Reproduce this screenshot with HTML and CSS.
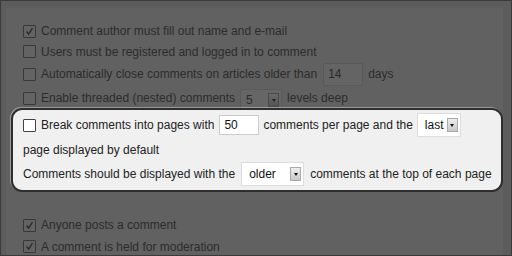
FILE: index.html
```html
<!DOCTYPE html>
<html lang="en">
<head>
    <meta charset="UTF-8">
    <title>Discussion Settings</title>
    <link rel="stylesheet" href="styles.css">
</head>
<body>
    <div class="frame">
        <div class="page">
            <div class="row row-first">
                <span class="check checked"><svg viewBox="0 0 13 13"><path d="M3 6.5 L5.5 9.5 L10 2.5" /></svg></span>
                Comment author must fill out name and e-mail
            </div>
            <div class="row row-second">
                <span class="check"></span>
                Users must be registered and logged in to comment
            </div>
            <div class="row row-tall">
                <span class="check"></span>
                Automatically close comments on articles older than
                <span class="field field-dim field-days">14</span>
                days
            </div>
            <div class="row row-tall">
                <span class="check"></span>
                Enable threaded (nested) comments
                <span class="select select-dim select-levels">5<span class="arrow"></span></span>
                levels deep
            </div>

            <section class="focus">
                <div class="focus-row">
                    <span class="check"></span>
                    Break comments into pages with
                    <span class="field field-pages">50</span>
                    comments per page and the
                    <span class="select select-last">last<span class="arrow"></span></span>
                </div>
                <div class="focus-row focus-plain">page displayed by default</div>
                <div class="focus-row focus-plain">
                    Comments should be displayed with the
                    <span class="select select-order">older<span class="arrow"></span></span>
                    comments at the top of each page
                </div>
            </section>

            <div class="row row-notify">
                <span class="check checked"><svg viewBox="0 0 13 13"><path d="M3 6.5 L5.5 9.5 L10 2.5" /></svg></span>
                Anyone posts a comment
            </div>
            <div class="row row-notify-next">
                <span class="check checked"><svg viewBox="0 0 13 13"><path d="M3 6.5 L5.5 9.5 L10 2.5" /></svg></span>
                A comment is held for moderation
            </div>
        </div>
    </div>
</body>
</html>
```
FILE: styles.css
```css
* {
    margin: 0;
    padding: 0;
    box-sizing: border-box;
}

body {
    font-family: "Liberation Sans", Arial, sans-serif;
    font-size: 12px;
    color: #2c2c2c;
    background-color: #5c5c5c;
}

.frame {
    width: 512px;
    height: 256px;
    border: 1px solid #3a3a3a;
    background-color: #5c5c5c;
    overflow: hidden;
}

.page {
    margin-left: 5px;
    margin-right: 8px;
    margin-top: 7px;
    height: 260px;
    background-color: #616161;
    padding-top: 13px;
    padding-left: 17px;
}

.row {
    display: flex;
    align-items: center;
    gap: 5px;
    height: 20px;
    white-space: nowrap;
}

.row-second {
    height: 21px;
}

.row-tall {
    height: 24px;
}

.check {
    display: inline-block;
    width: 13px;
    height: 13px;
    border: 1px solid #333;
    border-radius: 1px;
    flex-shrink: 0;
}

.check svg {
    display: block;
    width: 11px;
    height: 11px;
}

.check path {
    fill: none;
    stroke: #2a2a2a;
    stroke-width: 1.6;
}

.row .check {
    border-color: #383838;
    background-color: #636363;
}

.field {
    display: inline-flex;
    align-items: center;
    padding-left: 4px;
}

.field-dim {
    width: 40px;
    height: 23px;
    border: 1px solid #595959;
    background-color: #646464;
    color: #2a2a2a;
    margin-left: 1px;
}

.select {
    position: relative;
    display: inline-flex;
    align-items: center;
}

.select .arrow {
    position: absolute;
    top: 4px;
    right: 2px;
    width: 11px;
    height: 14px;
    border: 1px solid #aaa;
    background: linear-gradient(#eee, #c8c8c8);
}

.select .arrow::after {
    content: "";
    position: absolute;
    left: 2.5px;
    top: 5px;
    border-left: 2.5px solid transparent;
    border-right: 2.5px solid transparent;
    border-top: 3px solid #111;
}

.select-dim {
    width: 42px;
    height: 21px;
    background-color: #666;
    border: 1px solid #5a5a5a;
    padding-left: 5px;
    margin-top: 3px;
}

.select-dim .arrow {
    top: 3px;
    background: linear-gradient(#6a6a6a, #545454);
    border-color: #4a4a4a;
}

.select-dim .arrow::after {
    border-top-color: #222;
}

.focus {
    margin-left: -12px;
    margin-top: -2px;
    height: 84px;
    background-color: #f0f0f0;
    border: 2px solid #2e2e2e;
    border-radius: 11px;
    box-shadow: -1px -1px 0 rgba(255, 255, 255, 0.35);
    padding-top: 2px;
    padding-left: 10px;
    color: #222;
    position: relative;
    z-index: 1;
}

.focus-row {
    display: flex;
    align-items: center;
    gap: 4px;
    height: 26px;
    white-space: nowrap;
}

.focus-row .check {
    border-color: #444;
    background-color: #fff;
    margin-right: 1px;
}

.focus-plain {
    height: 24px;
}

.field-pages {
    width: 40px;
    height: 20px;
    background-color: #fff;
    border: 1px solid #ccc;
    color: #111;
    margin-left: 1px;
}

.select-last,
.select-order {
    height: 24px;
    background-color: #fff;
    border: 1px solid #ddd;
    color: #111;
    padding-left: 7px;
}

.select-last {
    width: 44px;
}

.select-order {
    width: 63px;
    margin-left: 2px;
    margin-right: 2px;
}

.row-notify {
    margin-top: 23px;
}

.row-notify-next {
    height: 23px;
}
```
